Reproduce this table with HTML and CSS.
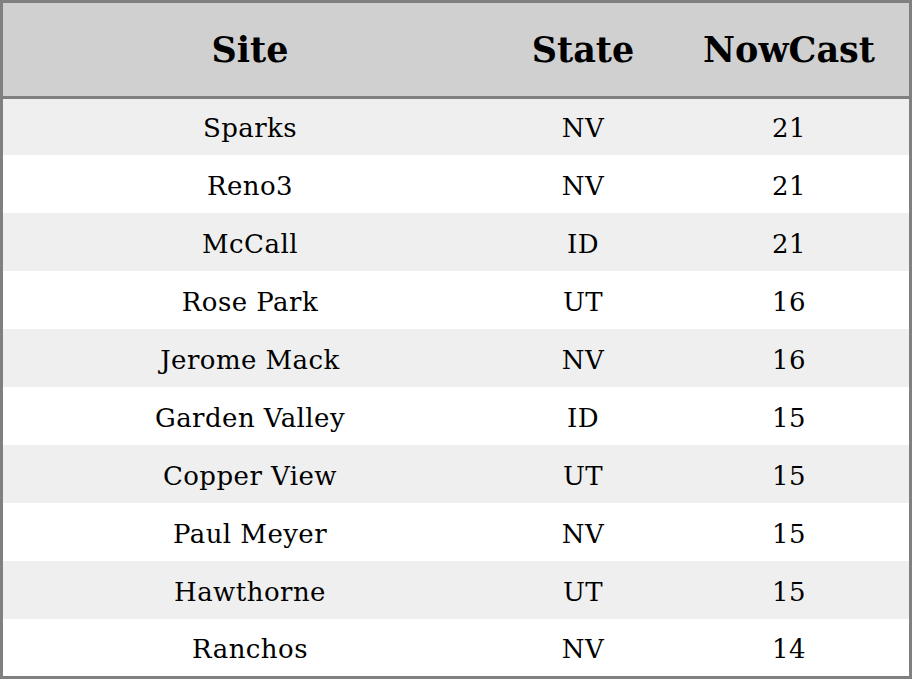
FILE: index.html
```html
<!DOCTYPE html>
<html>
<head>
<meta charset="utf-8">
<link rel="stylesheet" href="styles.css">
</head>
<body>
<table class="tbl">
  <thead>
    <tr><th class="c-site">Site</th><th class="c-state">State</th><th class="c-now">NowCast</th></tr>
  </thead>
  <tbody>
    <tr><td>Sparks</td><td>NV</td><td>21</td></tr>
    <tr><td>Reno3</td><td>NV</td><td>21</td></tr>
    <tr><td>McCall</td><td>ID</td><td>21</td></tr>
    <tr><td>Rose Park</td><td>UT</td><td>16</td></tr>
    <tr><td>Jerome Mack</td><td>NV</td><td>16</td></tr>
    <tr><td>Garden Valley</td><td>ID</td><td>15</td></tr>
    <tr><td>Copper View</td><td>UT</td><td>15</td></tr>
    <tr><td>Paul Meyer</td><td>NV</td><td>15</td></tr>
    <tr><td>Hawthorne</td><td>UT</td><td>15</td></tr>
    <tr><td>Ranchos</td><td>NV</td><td>14</td></tr>
  </tbody>
</table>
</body>
</html>
```
FILE: styles.css
```css
html, body {
  margin: 0;
  padding: 0;
  background: #ffffff;
}
.tbl {
  width: 912px;
  height: 679px;
  border-collapse: collapse;
  border: 3px solid #808080;
  font-family: "DejaVu Serif", serif;
  color: #000;
  table-layout: fixed;
}
.tbl th {
  background: #d0d0d0;
  font-size: 35px;
  font-weight: bold;
  height: 93px;
  padding: 0;
  text-align: center;
  border-bottom: 3px solid #808080;
}
.c-site { width: 494px; }
.c-state { width: 172px; }
.c-now { width: 240px; }
.tbl td {
  font-size: 26px;
  letter-spacing: 0.45px;
  text-align: center;
  padding: 3px 0 0;
  height: 55px;
}
.tbl tbody tr:first-child td { height: 54px; padding-top: 2px; }
.tbl tbody tr:last-child td { height: 54px; padding-top: 3px; }
.tbl tbody tr:nth-child(odd) { background: #efefef; }
.tbl tbody tr:nth-child(even) { background: #ffffff; }
```
